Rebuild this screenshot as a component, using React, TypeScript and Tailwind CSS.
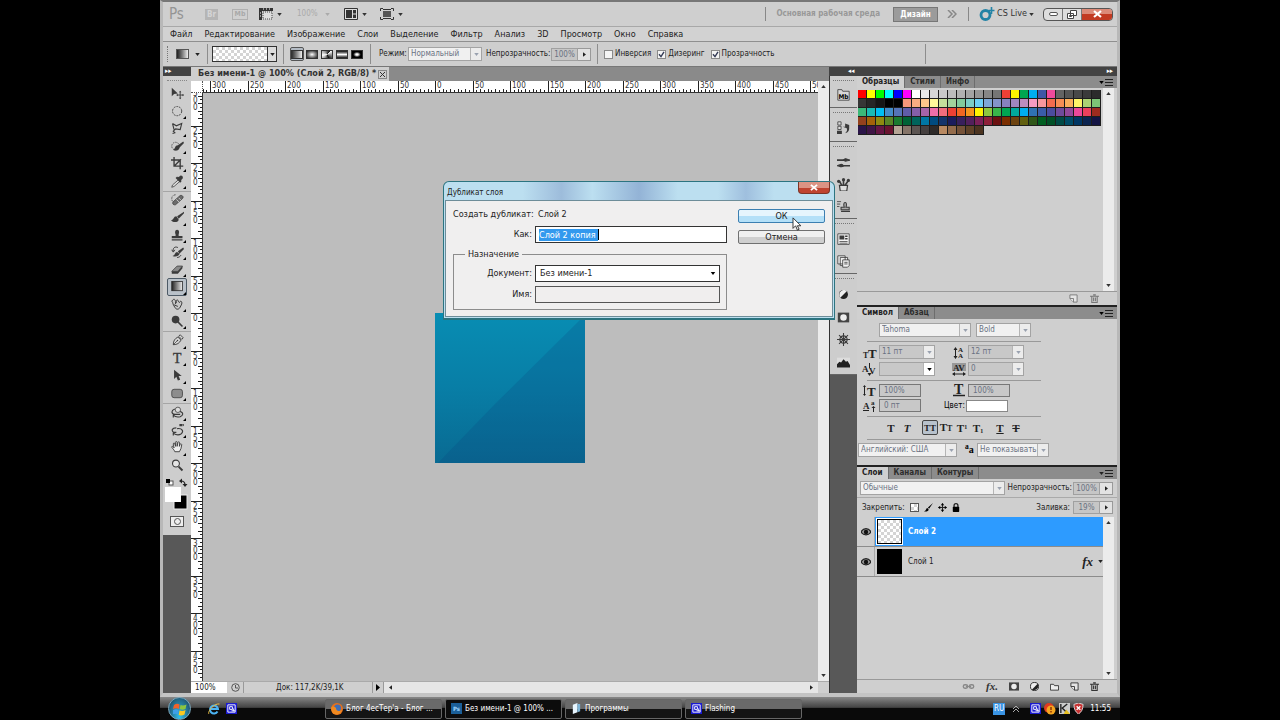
import { useEffect, useRef, useState } from "react";
import type { ReactNode } from "react";
import clsx from "clsx";

const swatches = (
    "ff0000 ffff00 00ff00 00ffff 0000ff ff00ff ffffff ebebeb d7d7d7 c9c9c9 bcbcbc b0b0b0 a3a3a3 959595 868686 757575 ee4036 fff200 00a651 00aeef 3f57a5 ee4a9b 636363 555555 484848 3a3a3a 2b2b2b " +
    "363636 262626 161616 000000 000000 f7977a f9ad81 fdc68a fff79a c4df9b a2d39c 82ca9d 7bcdc8 6ecff6 7ea7d8 8493ca 8882be a187be bc8dbf f49ac2 f6989d f26c4f f68e55 fbaf5c fff467 acd373 7cc576 " +
    "3bb878 1abbb4 00bff3 438cca 5574b9 605ca8 855fa8 a763a8 f06ea9 f26d7d ed4034 f26522 f7941d fff200 8dc73f 39b54a 00a651 00a99d 00aeef 2f72b4 3a5ca8 4a4c9e 6f4a9b 92489a ec4899 ed405b 9e2b1f " +
    "93411d a36209 8f8a10 598527 1a7b30 006236 00645b 0076a3 004b80 14346b 1b1c5c 38205c 52205c 7a2058 8e2039 6b1010 7b2e00 6d4310 626010 2f5618 005e20 005026 004a46 004b67 003663 0c2450 141444 " +
    "2a1448 3f1546 651644 6a1430 b5a595 857468 5c5552 45403f 2e2a29 b98a62 946c4c 755238 5f4228 4c3420"
).split(" ");

/* ---------- small building blocks ---------- */

function Tri({ className = "" }: { className?: string }) {
    return (
        <svg viewBox="0 0 6 4" className={clsx("h-[3px] w-[5px] shrink-0", className)} fill="currentColor">
            <path d="M0 0h6L3 4z" />
        </svg>
    );
}

function Checker({ className = "" }: { className?: string }) {
    return (
        <span className={clsx("block bg-white bg-[conic-gradient(#d4d4d4_25%,white_0_50%,#d4d4d4_0_75%,white_0)] bg-[length:6px_6px]", className)} />
    );
}

function Combo({ label, value, className = "", arrow = "text-gray-400", field = "bg-white/70 text-gray-500" }: {
    label: string; value: string; className?: string; arrow?: string; field?: string;
}) {
    return (
        <span className={clsx("relative flex h-[14px] items-stretch border border-[#a3a3a3]", className)}>
            <select aria-label={label} className={clsx("min-w-0 flex-1 appearance-none py-0 pr-[11px] pl-0.5 leading-[12px] outline-none", field)}>
                <option>{value}</option>
            </select>
            <span className={clsx("pointer-events-none absolute inset-y-0 right-0 flex w-[11px] items-center justify-center border-l border-[#b5b5b5] bg-[#ececec]", arrow)}>
                <Tri />
            </span>
        </span>
    );
}

function Percent({ label, value }: { label: string; value: string }) {
    return (
        <span className="flex h-[13px]">
            <input aria-label={label} defaultValue={value} className="w-[27px] border border-[#a0a0a0] bg-[#c6c6c6] text-center leading-[11px] text-gray-500 outline-none" />
            <button aria-label={`${label} ползунок`} className="flex w-[13px] items-center justify-center border border-l-0 border-[#999] bg-[#e2e2e2]">
                <Tri className="-rotate-90" />
            </button>
        </span>
    );
}

function Check({ label, on = false }: { label: string; on?: boolean }) {
    return (
        <label className="flex items-center gap-0.5">
            <span className="relative block size-[9px]">
                <input type="checkbox" defaultChecked={on} className="peer block size-[9px] appearance-none border border-[#8a8a8a] bg-[#f4f4f4]" />
                <svg viewBox="0 0 9 9" className="pointer-events-none absolute inset-0 hidden peer-checked:block" fill="none" stroke="#333a55" strokeWidth="1.4">
                    <path d="M2 4.2 4 6.6 7 1.8" />
                </svg>
            </span>
            {label}
        </label>
    );
}

function Tabs({ items }: { items: string[] }) {
    return (
        <div role="tablist" className="flex h-[12px] shrink-0 items-stretch bg-[#8c8c8c] text-[8px] font-bold">
            {items.map((t, i) => (
                <button key={t} role="tab" aria-selected={i === 0} className={clsx("border-r border-[#6d6d6d] px-[5px] leading-[12px]", i === 0 ? "bg-[#d0d0d0] text-[#222]" : "text-[#2d2d2d]")}>
                    {t}
                </button>
            ))}
            <button aria-label="Меню панели" className="ml-auto flex items-center gap-px pr-1">
                <Tri className="h-[2px] w-[4px]" />
                <svg viewBox="0 0 8 8" className="size-2" stroke="#222"><path d="M0 1.5h8M0 4.5h8M0 7.5h8" /></svg>
            </button>
        </div>
    );
}

function ScrollBar({ className = "" }: { className?: string }) {
    return (
        <div className={clsx("flex w-[11px] shrink-0 flex-col items-center justify-between bg-[#ececec] py-1 text-[#333]", className)}>
            <Tri className="rotate-180" />
            <Tri />
        </div>
    );
}

/* ---------- tool icons, 16x16 grid ---------- */

const D = "#3b3b3b";

const toolGroups: { name: string; icon: ReactNode; plain?: boolean }[][] = [
    [
        { name: "Перемещение", plain: true, icon: <><path d="M1 1v11l3-3 5-.5z" fill={D} /><path d="M12 6v9M7.500 10.500h9" stroke={D} strokeWidth="1.200" /><path d="m12 5 1.500 2h-3zM12 16l1.500-2h-3zM7 10.500l2-1.500v3zM17 10.500 15 9v3z" fill={D} /></> },
        { name: "Овальная область", icon: <circle cx="8" cy="8" r="6" fill="none" stroke={D} strokeDasharray="2.500 1.300" strokeWidth="1.200" /> },
        { name: "Лассо", icon: <path d="M2 2l5 3 7-3-2 8-6-1-3 3 2 2-3 1M2 2l2 8" fill="none" stroke={D} strokeWidth="1.500" /> },
        { name: "Быстрое выделение", icon: <><circle cx="6" cy="8" r="5" fill="none" stroke={D} strokeDasharray="2 1.200" /><path d="M16 2 9 7l2 3 6-6zM9 7c-4 0-3 4-6 6 4 2 8 0 8-3z" fill={D} /></> },
        { name: "Рамка", icon: <path d="M4 0v12h12M0 4h12v12M4 12l9-9" fill="none" stroke={D} strokeWidth="1.800" /> },
        { name: "Пипетка", icon: <><path d="m10 6-8 7-1 3 3-1 8-7z" fill="#ddd" stroke={D} /><path d="M11 2c2-3 6 0 4 3l-2 2 1 1-2 2-6-6 2-2 1 1z" fill={D} /></> },
    ],
    [
        { name: "Лечащая кисть", icon: <><path d="M6 1C3 1 1 3 1 6s1 4 3 5" fill="none" stroke={D} strokeDasharray="2 1" /><path d="m3 10 9-8c3-1 5 2 3 4l-9 8c-3 1-5-2-3-4z" fill="#6b6b6b" stroke={D} /><path d="m7 7 4 4M10 5l3 3" stroke="#ddd" /></> },
        { name: "Кисть", icon: <path d="M17 1 8 7l2 3 7-7zM7 7c-4 0-3 5-7 5 3 4 10 3 10-1z" fill={D} /> },
        { name: "Штамп", icon: <path d="M6 7c-1-2-1-6 2-6s3 4 2 6v2h5v3H1V9h5zM1 13.500h14v1.500H1z" fill={D} /> },
        { name: "Архивная кисть", icon: <><path d="M16 2 9 7l2 3 6-6zM8 8c-3 0-2 4-6 5 4 2 9 0 9-3z" fill={D} /><path d="M9 2C5 0 2 3 3 7M1 5l2 3 2-3M13 12c-1 2-3 3-5 3" fill="none" stroke={D} strokeWidth="1.300" /></> },
        { name: "Ластик", icon: <><path d="m1 11 7-7h7l-6 7z" fill="#8a8a8a" stroke={D} /><path d="M1 11h8v3H1zM9 11l6-7v3l-6 7z" fill={D} /></> },
        { name: "Градиент", icon: <rect x="1" y="2" width="14" height="12" fill="url(#grad-h)" stroke="#222" /> },
        { name: "Палец", icon: <path d="M3 2c2-2 3 3 4 4-1-4 2-5 3-1l1 1c1-3 4-2 3 2l-2 4c-2 4-6 3-7 0C2 9 3 6 1 4zM4 9l5 2M6 5v3" fill="#c8c8c8" stroke={D} strokeWidth="1.300" /> },
        { name: "Осветлитель", icon: <><circle cx="6" cy="6" r="5" fill={D} /><path d="m9 9 6 6" stroke={D} strokeWidth="2" /></> },
    ],
    [
        { name: "Перо", icon: <><path d="M3 14c0-5 2-8 6-10l4 4c-2 4-5 6-10 6zM10 3l2-2 4 4-2 2z" fill="#d8d8d8" stroke={D} strokeWidth="1.200" /><path d="m3 14 5-5" stroke={D} /><circle cx="8.500" cy="8.500" r="1" fill={D} /></> },
        { name: "Текст", icon: <text x="8" y="14" textAnchor="middle" fontSize="18" fontFamily="Liberation Serif, serif" fill={D} stroke={D} strokeWidth=".5">T</text> },
        { name: "Стрелка", icon: <path d="M4 1v12l3-3 2 5 3-1-2-5h4z" fill={D} /> },
        { name: "Фигура", icon: <rect x="1" y="3" width="14" height="11" rx="3" fill="#8d8d8d" stroke={D} /> },
    ],
    [
        { name: "Поворот 3D", icon: <><circle cx="9" cy="5" r="3.500" fill="#ddd" stroke={D} /><path d="M5 4C0 6 0 10 5 11h7M12 7c5 2 4 5 0 7-4 1-7 0-9-2M3 15v-4h4" fill="none" stroke={D} strokeWidth="1.500" /></> },
        { name: "Камера 3D", icon: <><path d="M11 0h4v3h-4zM15 1l2-1v3z" fill={D} /><path d="M7 5C1 5 0 9 4 11M8 6c7-1 9 4 5 7-3 2-7 1-10-1M3 15v-4h4" fill="none" stroke={D} strokeWidth="1.500" /></> },
        { name: "Рука", icon: <path d="M5 14C4 11 2 10 1 8c0-2 2-1 3 1L3 4c0-2 2-2 2 0l1 3V2c0-2 2-2 2 0v5l1-5c1-2 2-1 2 0v5l1-3c1-1 2 0 2 1l-1 5-2 4z" fill="#eee" stroke={D} strokeWidth="1.200" /> },
        { name: "Масштаб", plain: true, icon: <><circle cx="6.500" cy="6" r="4.500" fill="#e5e5e5" stroke={D} strokeWidth="1.400" /><path d="m10 10 5 5" stroke={D} strokeWidth="2.500" /></> },
    ],
];

function Toolbox() {
    const [active, setActive] = useState("Градиент");
    const heights = ["h-[105px]", "h-[139px]", "h-[71px]", "h-[71px]"];
    return (
        <aside className="flex w-7 shrink-0 flex-col bg-[#585858]">
            <div className="h-[9px] bg-[#434343] pl-0.5 text-[7px] leading-[8px] text-white">▸▸</div>
            <div className="flex flex-col bg-[#cdcdcd] pb-2">
                <div className="mx-1 mt-1 mb-[4px] border-t border-dotted border-[#888]" />
                {toolGroups.map((group, g) => (
                    <div key={g} className={clsx("flex flex-col", heights[g], g > 0 && "mt-px border-t border-[#a5a5a5]")}>
                        {group.map((t) => (
                            <button
                                key={t.name}
                                aria-label={t.name}
                                onClick={() => setActive(t.name)}
                                className={clsx("relative mx-1 flex min-h-0 flex-1 items-center justify-center rounded-xs border", active === t.name ? "border-[#4d5a66] bg-[#b9c1c9]" : "border-transparent")}
                            >
                                <svg viewBox="0 0 17 17" className="size-[13px]">{t.icon}</svg>
                                {!t.plain && <svg viewBox="0 0 3 3" className="absolute right-0 bottom-0 size-[3px]"><path d="M3 0v3H0z" /></svg>}
                            </button>
                        ))}
                    </div>
                ))}
                {/* foreground / background colours */}
                <svg viewBox="0 0 28 36" className="mt-1 h-9 w-7">
                    <rect x="6" y="3" width="4" height="4" fill="#fff" stroke="#555" />
                    <rect x="3" y="1" width="4" height="4" fill="#000" />
                    <path d="M18 3q4 0 4 4" fill="none" stroke="#222" strokeWidth="1.200" />
                    <path d="m16 3 3-2.500v5zM19.500 6h5L22 9z" fill="#222" />
                    <rect x="11" y="17" width="13" height="14" fill="#000" stroke="#eee" />
                    <rect x="2" y="9" width="16" height="15" fill="#fff" />
                </svg>
                <button aria-label="Быстрая маска" className="mx-auto mt-0.5 flex h-[11px] w-[14px] items-center justify-center border border-[#555] bg-[#eee]">
                    <span className="size-[7px] rounded-full border border-[#555]" />
                </button>
            </div>
        </aside>
    );
}

/* ---------- application bars ---------- */

function TitleBar() {
    return (
        <header className="flex h-6 shrink-0 items-center bg-[#cfcfcf] pl-[6px] text-[#333]">
            <span className="w-[36px] text-[15px] leading-[18px] text-[#949494]">Ps</span>
            <button className="flex h-[11px] w-[13px] items-center justify-center bg-[#b5b5b5] text-[8px] leading-[11px] font-bold text-[#d4d4d4]">Br</button>
            <button className="ml-[14px] flex h-[11px] w-4 items-center justify-center border border-[#b0b0b0] text-[7px] leading-[9px] font-bold text-[#a8a8a8]">Mb</button>
            <button aria-label="Вспомогательные элементы" className="ml-[11px] flex items-center gap-1">
                <svg viewBox="0 0 14 12" className="h-3 w-[14px]"><path d="M0 0h14v3H3v9H0z" fill="#333" /><path d="M4 4h9v7H4z" fill="#ddd" stroke="#444" strokeDasharray="1 1" /><path d="M4 1h1m2 0h1m2 0h1M1 5h1m-1 3h1" stroke="#fff" /></svg>
                <Tri />
            </button>
            <button className="ml-[15px] flex items-center gap-[7px] text-[8px] text-[#aaa]">100% <Tri /></button>
            <button aria-label="Упорядочить документы" className="ml-[14px] flex items-center gap-1">
                <svg viewBox="0 0 14 12" className="h-3 w-[14px]"><path d="M.5.500h13v11H.5z" fill="#ddd" stroke="#333" /><path d="M2 2h6v8H2zM9 2h3v3.500H9zM9 6.500h3V10H9z" fill="#333" /></svg>
                <Tri />
            </button>
            <button aria-label="Режимы экрана" className="ml-[13px] flex items-center gap-1">
                <svg viewBox="0 0 14 12" className="h-3 w-[14px]"><path d="M3 3h8v6H3z" fill="#555" /><path d="M.5 3V.500H3M11 .500h2.500V3M13.500 9v2.500H11M3 11.500H.5V9M3 1.500h8M3 10.500h8" fill="none" stroke="#333" /></svg>
                <Tri />
            </button>
            <div className="ml-auto flex h-full items-center pr-1">
                <span className="mr-[10px] h-[14px] border-l border-[#888]" />
                <button className="text-[8px] font-bold whitespace-nowrap text-[#989898]">Основная рабочая среда</button>
                <button className="ml-[13px] h-[15px] w-[45px] border border-[#777] bg-[#9b9b9b] text-[8px] leading-[13px] font-bold text-white">Дизайн</button>
                <svg viewBox="0 0 10 8" className="ml-[9px] h-2 w-[10px]" fill="none" stroke="#888" strokeWidth="1.500"><path d="m1 0 4 4-4 4M5 0l4 4-4 4" /></svg>
                <span className="ml-[11px] h-[14px] border-l border-[#888]" />
                <svg viewBox="0 0 16 14" className="ml-[10px] h-[14px] w-4"><circle cx="6.500" cy="8" r="4.500" fill="none" stroke="#2383a5" strokeWidth="2.800" /><path d="M12.500 0v7M9.500 3.500h6" stroke="#2383a5" strokeWidth="1.600" /></svg>
                <button className="ml-0.5 flex items-center gap-0.5 text-[9px] whitespace-nowrap">CS Live <Tri /></button>
                <div className="ml-[9px] flex h-[13px] overflow-hidden rounded-sm border border-[#555] bg-[#ddd]">
                    <button aria-label="Свернуть" className="flex w-[19px] items-center justify-center border-r border-[#777]"><span className="h-1 w-[9px] rounded-xs border border-[#555] bg-white" /></button>
                    <button aria-label="Восстановить" className="flex w-[19px] items-center justify-center border-r border-[#777]">
                        <svg viewBox="0 0 10 9" className="h-[9px] w-[10px]" fill="#fff" stroke="#444"><path d="M3.500.500h6v5h-6zM.5 3.500h6v5h-6z" /><path d="M2.500 5.500h2v1h-2z" /></svg>
                    </button>
                    <button aria-label="Закрыть" className="flex w-[30px] items-center justify-center bg-linear-to-b from-[#dc8a78] from-50% to-[#c23a22] to-50%">
                        <svg viewBox="0 0 9 8" className="h-2 w-[9px]" stroke="#fff" strokeWidth="2.200"><path d="m1 1 7 6M8 1 1 7" /></svg>
                    </button>
                </div>
            </div>
        </header>
    );
}

const menus = ["Файл", "Редактирование", "Изображение", "Слои", "Выделение", "Фильтр", "Анализ", "3D", "Просмотр", "Окно", "Справка"];

function MenuBar() {
    return (
        <nav className="flex h-[15px] shrink-0 items-center gap-[12px] border-t border-[#a8a8a8] bg-[#d2d2d2] pl-[7px] text-[9px] text-[#222]">
            {menus.map((m) => <button key={m} className="leading-[12px]">{m}</button>)}
        </nav>
    );
}

const fills = [
    ["Линейный", "bg-linear-to-r from-[#333] to-[#eee]"],
    ["Радиальный", "bg-radial from-white to-[#222]"],
    ["Конусовидный", "bg-[conic-gradient(from_45deg,#fff,#111,#fff_60%,#111)]"],
    ["Зеркальный", "bg-linear-to-b from-[#111] via-white to-[#111]"],
    ["Ромбовидный", "bg-radial from-white from-15% to-black to-60%"],
];

function OptionsBar() {
    return (
        <div className="flex h-[26px] shrink-0 items-center border-t border-b border-t-[#8f8f8f] border-b-[#777] bg-[#cecece] pl-1 text-[8px] whitespace-nowrap text-[#222]">
            <span className="h-4 border-l border-dotted border-[#777]" />
            <button aria-label="Инструмент" className="ml-2 flex items-center gap-[6px]">
                <span className="h-[10px] w-[13px] border border-[#555] bg-linear-to-r from-[#222] to-[#eee]" /><Tri />
            </button>
            <span className="ml-[7px] h-5 border-l border-[#8d8d8d]" />
            <button aria-label="Градиент" className="ml-1 flex h-4 w-[65px] border border-[#333]">
                <Checker className="h-full flex-1" />
                <span className="flex h-full w-[9px] items-center justify-center border-l border-[#333] bg-[#ddd]"><Tri /></span>
            </button>
            <span className="ml-[6px] h-5 border-l border-[#8d8d8d]" />
            <div className="ml-[6px] flex gap-px">
                {fills.map(([name, bg], i) => (
                    <button key={name} aria-label={name} className={clsx("flex h-[14px] w-[14px] items-center justify-center rounded-xs border", i === 0 ? "border-[#555] bg-[#b3bbc4]" : "border-transparent")}>
                        <span className={clsx("h-[9px] w-[12px] border border-[#333]", bg)} />
                    </button>
                ))}
            </div>
            <span className="ml-[6px] h-5 border-l border-[#8d8d8d]" />
            <span className="ml-2 w-[29px]">Режим:</span>
            <Combo label="Режим" value="Нормальный" className="w-[74px]" />
            <span className="ml-1 w-[65px]">Непрозрачность:</span>
            <Percent label="Непрозрачность" value="100%" />
            <span className="mx-[6px] h-5 border-l border-[#8d8d8d]" />
            <div className="flex gap-[6px]">
                <Check label="Инверсия" />
                <Check label="Дизеринг" on />
                <Check label="Прозрачность" on />
            </div>
            <span className="mr-[191px] ml-auto h-5 border-l border-[#8d8d8d]" />
        </div>
    );
}

/* ---------- document window ---------- */

// 50 px of the document take 37.5 px on screen
const STEP = 37.5;

function useSize() {
    const ref = useRef<SVGSVGElement>(null);
    const [size, setSize] = useState({ w: 0, h: 0 });

    useEffect(() => {
        const measure = () => {
            const box = ref.current?.getBoundingClientRect();
            if (box) setSize({ w: box.width, h: box.height });
        };
        measure();
        window.addEventListener("resize", measure);
        return () => window.removeEventListener("resize", measure);
    }, []);

    return { ref, ...size };
}

// tick marks from just before the edge of the ruler up to its length
function ticksFor(length: number, origin: number) {
    const list: { n: number; pos: number }[] = [];
    for (let n = -Math.floor(((origin + 6) * 10) / STEP); origin + (n * STEP) / 10 < length; n++) {
        list.push({ n, pos: Math.round(origin + (n * STEP) / 10) });
    }
    return list;
}

function RulerH() {
    const { ref, w } = useSize();
    return (
        <svg ref={ref} className="h-3 min-w-0 flex-1 bg-white">
            {ticksFor(w, 232).map(({ n, pos }) => (
                <g key={n}>
                    <path d={`M${pos + 0.5} ${n % 10 === 0 ? 0 : n % 2 ? 9 : 8}V12`} stroke="#222" />
                    {n % 10 === 0 && <text x={pos + 2} y="7" fontSize="8" fill="#333">{Math.abs(n) * 5}</text>}
                </g>
            ))}
            <path d={`M0 11.500H${w}`} stroke="#333" />
        </svg>
    );
}

function RulerV() {
    const { ref, h } = useSize();
    return (
        <svg ref={ref} className="h-full w-3 shrink-0 bg-white">
            {ticksFor(h, 220).map(({ n, pos }) => (
                <g key={n}>
                    <path d={`M${n % 10 === 0 ? 0 : n % 2 ? 9 : 7} ${pos + 0.5}H12`} stroke="#222" />
                    {n % 10 === 0 && String(Math.abs(n) * 5).split("").map((c, k) => (
                        <text key={k} x="2" y={pos + 8 + k * 7} fontSize="8" fill="#333">{c}</text>
                    ))}
                </g>
            ))}
            <path d={`M11.500 0V${h}`} stroke="#333" />
        </svg>
    );
}

function DocumentWindow() {
    return (
        <main className="flex min-w-0 flex-1 flex-col">
            <div className="flex h-[14px] shrink-0 bg-[#8a8a8a]">
                <div className="flex items-center gap-0.5 bg-[#cfcfcf] pr-0.5 pl-[7px] text-[9px] font-bold whitespace-nowrap text-[#333]">
                    Без имени-1 @ 100% (Слой 2, RGB/8) *
                    <button aria-label="Закрыть документ" className="flex size-[9px] items-center justify-center border border-[#888]">
                        <svg viewBox="0 0 5 5" className="size-[5px]" stroke="#333"><path d="m0 0 5 5M5 0 0 5" /></svg>
                    </button>
                </div>
            </div>
            <div className="flex min-h-0 flex-1">
                <div className="flex min-w-0 flex-1 flex-col">
                    <div className="flex shrink-0">
                        <span className="size-3 border-r border-b border-dotted border-[#555] bg-white" />
                        <RulerH />
                    </div>
                    <div className="flex min-h-0 flex-1">
                        <RulerV />
                        <div className="relative min-w-0 flex-1 overflow-hidden bg-[#bdbdbd]">
                            {/* artboard */}
                            <svg viewBox="0 0 150 150" className="absolute top-[220px] left-[232px] size-[150px]">
                                <rect width="150" height="150" fill="url(#sea)" />
                                <path d="M150 2v148H3l58-60z" fill="#0a3f7c" opacity=".2" />
                            </svg>
                        </div>
                    </div>
                </div>
                <ScrollBar />
            </div>
            <footer className="flex h-[12px] shrink-0 items-stretch border-t border-[#aaa] bg-[#cfcfcf] text-[8px] text-[#222]">
                <input aria-label="Масштаб" defaultValue="100%" className="w-9 bg-white pl-1 leading-[11px] outline-none" />
                <button aria-label="Предпросмотр" className="flex w-[17px] items-center justify-center border-r border-[#999]">
                    <svg viewBox="0 0 9 9" className="size-[9px]" fill="none" stroke="#555"><circle cx="4.500" cy="4.500" r="3.800" /><path d="M4.500 2v3H7" /></svg>
                </button>
                <span className="w-32 pl-8 leading-[11px]">Док: 117,2K/39,1K</span>
                <button aria-label="Сведения" className="flex w-[12px] items-center justify-center border-x border-[#999]">
                    <svg viewBox="0 0 4 7" className="h-[7px] w-1"><path d="M0 0v7l4-3.500z" /></svg>
                </button>
                <div className="flex flex-1 items-center justify-between bg-[#e6e6e6] px-1">
                    <Tri className="rotate-90" />
                    <Tri className="-rotate-90" />
                </div>
                <span className="w-[11px]" />
            </footer>
        </main>
    );
}

/* ---------- collapsed panels ---------- */

const dock: { name: string; icon: ReactNode }[][] = [
    [{ name: "Mini Bridge", icon: <><path d="M1 2h5l1 2h8v11H1z" fill="#d8d8d8" stroke={D} /><text x="8" y="13" textAnchor="middle" fontSize="8" fontWeight="bold">Mb</text></> }],
    [{ name: "История", icon: <><path d="M1 1h4v4H1zM1 6.500h4v4H1z" fill="#ddd" stroke={D} /><path d="M0 12h6v4H0z" fill={D} /><path d="M7 7h3V3l5 2v4c0 4-3 6-5 6 2-2 3-3 2-6z" fill={D} /></> }],
    [
        { name: "Наборы кистей", icon: <><path d="M0 5h9M7 12h9" stroke={D} strokeWidth="2" /><path d="M8 5c3-4 4 0 8 0-4 0-5 3-8 0zM8 12c-3-4-4 0-8 0 4 0 5 3 8 0z" fill={D} stroke={D} strokeWidth="1.500" /></> },
        { name: "Кисть", icon: <><path d="M3 9h10l-1 7H4z" fill="#ddd" stroke={D} strokeWidth="1.500" /><path d="M8 9V3M10 9l4-6M6 9 3 4" stroke={D} strokeWidth="2" /><circle cx="8" cy="2" r="2" fill={D} /><circle cx="14" cy="3" r="2" fill={D} /><circle cx="2" cy="4" r="2" fill={D} /></> },
        { name: "Источник клонов", icon: <><path d="M9 9c-1-3-1-6 1-6s2 3 1 6h4v3H5V9zM5 14h11" fill="#aaa" stroke={D} strokeWidth="1.300" /><path d="M0 2h5M0 5h4M0 8h3" stroke={D} /></> },
    ],
    [
        { name: "Стили слоев", icon: <><path d="M1 1h14v13H1z" fill="#f3f3f3" stroke={D} /><path d="M3 3h6v5H3zM10 3h3v2h-3zM10 6h3v2h-3zM3 10h10v1H3zM3 12h10v1H3z" fill={D} /></> },
        { name: "Композиции слоев", icon: <><path d="M1 1h9v10H1zM4 3h9v10H4z" fill="#f0f0f0" stroke={D} /><path d="M7 6h8v7l-2 2H7z" fill="#f0f0f0" stroke={D} /><path d="M9 9h4m-4 2h4" stroke={D} /></> },
    ],
    [
        { name: "Коррекция", icon: <><circle cx="8" cy="8" r="5.500" fill="#222" /><path d="M4 12c-3-4 0-9 4-9.500 2 0 3 .5 4 1.500z" fill="#eee" /></> },
        { name: "Маски", icon: <><path d="M1 2h14v12H1z" fill="#444" /><circle cx="8" cy="8" r="4" fill="#eee" /></> },
        { name: "Навигатор", icon: <><circle cx="8" cy="8" r="4.500" fill="none" stroke={D} strokeWidth="1.500" /><path d="M8 0v16M0 8h16M2.500 2.500l11 11M13.500 2.500l-11 11" stroke={D} strokeWidth="1.300" /></> },
        { name: "Гистограмма", icon: <><path d="M0 2h16v12H0z" fill="#ddd" /><path d="M0 14V10l3-3 2 1 3-4 3 3 2-1 3 5v3z" fill="#222" /></> },
    ],
];

function Dock() {
    const heights = ["h-[32px]", "h-[34px]", "h-[77px]", "h-[55px]", "h-[101px]"];
    return (
        <aside className="flex w-7 shrink-0 flex-col border-l border-[#333] bg-[#585858]">
            {dock.map((group, g) => (
                <div key={g} className={clsx("flex flex-col border-b border-[#666] bg-[#cdcdcd]", heights[g])}>
                    <span className={clsx("mx-[3px] mt-1 border-t border-dotted border-[#777]", g > 1 && "mb-1")} />
                    {group.map((p) => (
                        <button key={p.name} aria-label={p.name} className="flex min-h-0 flex-1 items-center justify-center">
                            <svg viewBox="0 0 16 16" className="size-[13px]">{p.icon}</svg>
                        </button>
                    ))}
                </div>
            ))}
        </aside>
    );
}

/* ---------- panels ---------- */

function TrashIcon() {
    return <svg viewBox="0 0 10 10" className="size-[9px]" fill="none" stroke="currentColor" strokeWidth="1.200"><path d="M2 3v6.500h6V3M0 2.500h10M3.500 1h3M4 4v4M6 4v4" /></svg>;
}

function PageIcon() {
    return <svg viewBox="0 0 10 10" className="size-[9px]" fill="#e5e5e5" stroke="currentColor"><path d="M1 1h8v8H5L1 5z" /><path d="M1 5h4v4" /></svg>;
}

function SwatchesPanel() {
    return (
        <section className="flex h-[229px] shrink-0 flex-col bg-[#cfcfcf]">
            <Tabs items={["Образцы", "Стили", "Инфо"]} />
            <div className="flex min-h-0 flex-1">
                <div className="min-w-0 flex-1 px-px pt-0.5">
                    <div className="grid w-[243px] grid-cols-27">
                        {swatches.map((c, i) => (
                            <button key={i} aria-label={`#${c}`} className="size-[9px] border-r border-b border-[#1d1d1d]" style={{ backgroundColor: `#${c}` }} />
                        ))}
                    </div>
                </div>
                <ScrollBar className="mr-[3px]" />
            </div>
            <div className="flex h-[14px] items-center justify-end gap-3 border-t border-[#999] pr-[18px] text-[#777]">
                <button aria-label="Новый образец"><PageIcon /></button>
                <button aria-label="Удалить образец"><TrashIcon /></button>
            </div>
        </section>
    );
}

function Glyph({ children }: { children: ReactNode }) {
    return <svg viewBox="0 0 14 13" className="h-[13px] w-[14px] shrink-0 overflow-visible" fontFamily="Liberation Serif, serif" fontWeight="bold" fill="#222">{children}</svg>;
}

const fauxStyles: { name: string; node: ReactNode; cls: string }[] = [
    { name: "Полужирный", node: "T", cls: "font-bold" },
    { name: "Курсив", node: "T", cls: "italic font-bold" },
    { name: "Все прописные", node: "TT", cls: "ml-[7px] font-bold" },
    { name: "Капители", node: <>T<span className="text-[8px]">T</span></>, cls: "font-bold" },
    { name: "Верхний индекс", node: <>T<sup className="text-[6px]">1</sup></>, cls: "font-bold" },
    { name: "Нижний индекс", node: <>T<sub className="text-[6px]">1</sub></>, cls: "font-bold" },
    { name: "Подчеркнутый", node: "T", cls: "ml-[6px] font-bold underline" },
    { name: "Зачеркнутый", node: "T", cls: "font-bold line-through" },
];

function CharacterPanel() {
    const grey = "bg-[#c8c8c8] text-gray-500";
    const box = "h-[13px] w-[42px] border border-[#777] bg-[#c8c8c8] pl-1 leading-[11px] text-gray-500 outline-none";
    return (
        <section className="flex h-[158px] shrink-0 flex-col bg-[#cfcfcf] text-[8px]">
            <Tabs items={["Символ", "Абзац"]} />
            <div className="flex w-[184px] flex-1 flex-col justify-between pt-1 pb-2 pl-1.5">
                <div className="flex gap-[5px] pl-4">
                    <Combo label="Гарнитура" value="Tahoma" className="w-[92px]" />
                    <Combo label="Начертание" value="Bold" className="w-[55px]" />
                </div>
                <hr className="ml-1 border-[#999]" />
                <div className="grid grid-cols-[14px_71px_14px_1fr] items-center gap-x-0.5 gap-y-[3px]">
                    <Glyph><text x="0" y="12" fontSize="8">T</text><text x="5" y="12" fontSize="13">T</text></Glyph>
                    <Combo label="Кегль" value="11 пт" className="w-[56px]" field={grey} />
                    <Glyph><text x="6" y="6" fontSize="7">A</text><text x="6" y="12" fontSize="7">A</text><path d="M3.500 2v9" stroke="#222" /><path d="m1.500 4 2-3 2 3zM1.500 10l2 3 2-3z" /></Glyph>
                    <Combo label="Интерлиньяж" value="12 пт" className="w-[56px]" field={grey} />
                    <Glyph><text x="-1" y="9" fontSize="9">A</text><text x="6" y="11" fontSize="9">V</text><path d="M6.500 0v5" stroke="#222" /><path d="m4.500 10 2 3 2-3z" /></Glyph>
                    <Combo label="Кернинг" value=" " className="w-[56px]" field={grey} arrow="bg-white text-black" />
                    <Glyph><rect width="14" height="8" fill="#999" /><text x="1" y="8" fontSize="9">AV</text><path d="M1 11h12" stroke="#222" /><path d="m0 11 3-2v4zM14 11l-3-2v4z" /></Glyph>
                    <Combo label="Трекинг" value="0" className="w-[56px]" field={grey} />
                </div>
                <hr className="ml-1 border-[#999]" />
                <div className="grid grid-cols-[14px_71px_14px_1fr] items-center gap-x-0.5 gap-y-0.5">
                    <Glyph><path d="M1.500 2v9" stroke="#222" /><path d="M0 3l1.500-2L3 3zM0 10l1.500 2L3 10z" /><text x="4" y="12" fontSize="13">T</text></Glyph>
                    <input aria-label="Масштаб по вертикали" defaultValue="100%" className={box} />
                    <Glyph><text x="2" y="10" fontSize="14">T</text><path d="M1 11.500h12" stroke="#222" strokeWidth="1.500" /></Glyph>
                    <input aria-label="Масштаб по горизонтали" defaultValue="100%" className={box} />
                    <Glyph><text x="0" y="10" fontSize="9">A</text><text x="8" y="6" fontSize="7">a</text><path d="M0 11.500h6M10.500 8v5" stroke="#222" /><path d="m8.500 9 2-2 2 2z" /></Glyph>
                    <input aria-label="Сдвиг базовой линии" defaultValue="0 пт" className={box} />
                    <label htmlFor="color" className="col-span-2 -ml-2 flex items-center justify-between">
                        Цвет:
                        <button id="color" aria-label="Цвет текста" className="ml-auto h-[12px] w-[42px] border border-[#888] bg-white" />
                        <span className="w-[33px]" />
                    </label>
                </div>
                <hr className="ml-1 border-[#999]" />
                <div className="flex h-[15px] items-center pl-5 font-['Liberation_Serif',serif] text-[11px] text-[#222]">
                    {fauxStyles.map((s, i) => (
                        <button key={s.name} aria-label={s.name} className={clsx("h-[15px] w-4 rounded-xs border leading-[12px] whitespace-nowrap", i === 2 ? "border-[#444] bg-[#b8c2cc] text-[9px]" : "border-transparent", s.cls)}>
                            {s.node}
                        </button>
                    ))}
                </div>
                <hr className="ml-1 border-[#999]" />
                <div className="-mr-2 -ml-[5px] flex items-center">
                    <Combo label="Язык" value="Английский: США" className="w-[100px]" />
                    <span className="ml-[8px] w-3 font-['Liberation_Serif',serif] text-[10px] leading-[12px] font-bold"><sup>a</sup>a</span>
                    <Combo label="Сглаживание" value="Не показывать" className="w-[72px]" />
                </div>
            </div>
        </section>
    );
}

const layers = [
    { name: "Слой 2", filled: false },
    { name: "Слой 1", filled: true },
];

function LayersPanel() {
    const [selected, setSelected] = useState("Слой 2");
    return (
        <section className="flex min-h-0 flex-1 flex-col bg-[#cfcfcf] text-[8px] text-[#222]">
            <Tabs items={["Слои", "Каналы", "Контуры"]} />
            <div className="flex h-[19px] shrink-0 items-center border-b border-[#aaa] pr-1 pl-[3px]">
                <Combo label="Режим наложения" value="Обычные" className="w-[145px]" />
                <span className="ml-auto pr-px">Непрозрачность:</span>
                <Percent label="Непрозрачность слоя" value="100%" />
            </div>
            <div className="flex h-[19px] shrink-0 items-center gap-[5px] pr-1 pl-[5px]">
                Закрепить:
                <button aria-label="Прозрачные пикселы"><Checker className="size-[9px] border border-[#555]" /></button>
                <button aria-label="Цвета пикселов"><svg viewBox="0 0 16 16" className="size-[9px]"><path d="M16 0 7 8l2 2zM6 9c-3 1-2 5-6 6 5 1 9-1 8-4z" /></svg></button>
                <button aria-label="Положение"><svg viewBox="0 0 16 16" className="size-[9px]"><path d="M8 1v14M1 8h14" stroke="#222" strokeWidth="2" /><path d="m8 0 3 4H5zM8 16l3-4H5zM0 8l4-3v6zM16 8l-4-3v6z" /></svg></button>
                <button aria-label="Закрепить все"><svg viewBox="0 0 12 14" className="h-[9px] w-[8px]"><path d="M3 7V4c0-4 6-4 6 0v3" fill="none" stroke="#222" strokeWidth="2" /><rect x="1" y="6" width="10" height="8" rx="1" /></svg></button>
                <span className="ml-auto -mr-0.5">Заливка:</span>
                <Percent label="Заливка" value="19%" />
            </div>
            <div className="flex min-h-0 flex-1">
                <ul className="min-w-0 flex-1">
                    {layers.map((l) => (
                        <li key={l.name} className="flex h-[30px] border-b border-[#8c8c8c]">
                            <button aria-label={`Видимость ${l.name}`} className="flex w-[18px] items-center justify-center border-r border-[#aaa]">
                                <svg viewBox="0 0 16 12" className="h-[8px] w-[10px]"><path d="M0 6c4-7 12-7 16 0-4 6-12 6-16 0z" fill="#999" stroke="#222" strokeWidth="2" /><circle cx="8" cy="6" r="3.500" fill="#111" /></svg>
                            </button>
                            <button onClick={() => setSelected(l.name)} className={clsx("flex flex-1 items-center gap-[6px] pl-0.5 text-left", selected === l.name ? "bg-[#2d9bff] font-bold text-white" : "")}>
                                {l.filled ? <span className="size-[25px] bg-black" /> : <Checker className="size-[25px] border border-black outline outline-white" />}
                                {l.name}
                            </button>
                            {l.filled && (
                                <span className="flex items-center gap-[5px] font-['Liberation_Serif',serif] text-[13px] font-bold italic">fx <Tri /></span>
                            )}
                        </li>
                    ))}
                </ul>
                <ScrollBar className="mr-[3px]" />
            </div>
            <div className="flex h-[14px] shrink-0 items-center justify-end gap-[11px] border-t border-[#999] pr-[18px] text-[#333]">
                <button aria-label="Связать слои"><svg viewBox="0 0 14 8" className="h-[7px] w-[13px]" fill="none" stroke="#888" strokeWidth="1.500"><rect x="1" y="2" width="5" height="4" rx="2" /><rect x="8" y="2" width="5" height="4" rx="2" /><path d="M4 4h6" /></svg></button>
                <button className="font-['Liberation_Serif',serif] text-[11px] leading-[13px] font-bold italic">fx.</button>
                <button aria-label="Добавить маску"><svg viewBox="0 0 11 9" className="h-[9px] w-[10px]"><path d="M0 0h11v9H0z" fill="#444" /><circle cx="5.500" cy="4.500" r="3" fill="#eee" /></svg></button>
                <button aria-label="Корректирующий слой"><svg viewBox="0 0 10 10" className="size-[9px]"><circle cx="5" cy="5" r="4.500" fill="#eee" stroke="#222" /><path d="M8.500 2 2 8.500c4 2 9-2 6.500-6.500z" fill="#222" /></svg></button>
                <button aria-label="Создать группу"><svg viewBox="0 0 10 8" className="h-2 w-[9px]"><path d="M.5 1h3.500l1 1.500h4.500v5H.5z" fill="#eee" stroke="#333" /></svg></button>
                <button aria-label="Новый слой"><PageIcon /></button>
                <button aria-label="Удалить слой"><TrashIcon /></button>
            </div>
        </section>
    );
}

/* ---------- dialog ---------- */

function DuplicateDialog() {
    return (
        <div role="dialog" aria-labelledby="dlg-title" className="absolute top-[181px] left-[283px] w-[392px] rounded-t-md border border-b-2 border-[#2c7480] bg-[#bcdff0] px-px pb-px text-[9px] text-[#222]">
            <div className="flex h-[18px] items-start bg-linear-to-r from-transparent from-20% via-[#9dbcdb] via-30% to-transparent to-38%">
                <div className="flex h-full flex-1 items-start bg-linear-to-r from-transparent from-38% via-[#93b3d6] via-50% to-transparent to-60%">
                    <h1 id="dlg-title" className="flex-1 pt-[5px] pl-0.5 text-[8px] leading-[12px]">Дубликат слоя</h1>
                    <span className="mr-6 h-full w-14 bg-linear-to-r from-transparent via-[#9fbfde] to-transparent" />
                    <button aria-label="Закрыть" className="mr-[3px] flex h-[12px] w-8 items-center justify-center rounded-b-sm border border-t-0 border-[#7c3426] bg-linear-to-b from-[#dc9484] from-50% to-[#c04430] to-50%">
                        <svg viewBox="0 0 9 8" className="h-[7px] w-2" stroke="#fff" strokeWidth="2.200"><path d="m1 1 7 6M8 1 1 7" /></svg>
                    </button>
                </div>
            </div>
            <form className="flex border border-[#6d8d99] bg-[#f0efef] px-[7px] pt-[8px] pb-[6px]" onSubmit={(e) => e.preventDefault()}>
                <div className="w-[274px]">
                    <div className="flex h-[12px] items-center gap-[6px]"><span className="w-[79px] text-right whitespace-nowrap">Создать дубликат:</span><span>Слой 2</span></div>
                    <div className="mt-[5px] flex items-center gap-[3px]">
                        <label htmlFor="copy" className="w-[79px] text-right">Как:</label>
                        <div className="flex h-[17px] flex-1 items-center border border-[#333] bg-white px-[3px]">
                            <input id="copy" defaultValue="Слой 2 копия" size={1} className="h-[12px] w-[59px] bg-[#3399ee] leading-[12px] text-white outline-none" />
                            <span className="h-[11px] border-l border-black" />
                        </div>
                    </div>
                    <fieldset className="mt-1 border border-[#8c8c8c] pr-[6px] pb-1.5">
                        <legend className="ml-[11px] px-[3px] leading-[14px]">Назначение</legend>
                        <div className="mt-1 flex items-center gap-[3px]">
                            <label htmlFor="doc" className="w-[78px] text-right">Документ:</label>
                            <span className="relative flex h-[17px] flex-1">
                                <select id="doc" className="w-full appearance-none border border-[#333] bg-white pl-1 leading-[15px] outline-none"><option>Без имени-1</option></select>
                                <Tri className="pointer-events-none absolute top-[7px] right-1 w-[6px] text-black" />
                            </span>
                        </div>
                        <div className="mt-1 flex items-center gap-[3px]">
                            <label htmlFor="name" className="w-[78px] text-right">Имя:</label>
                            <input id="name" disabled className="h-[17px] min-w-0 flex-1 border border-[#555] bg-[#f0eeee]" />
                        </div>
                    </fieldset>
                </div>
                <div className="ml-auto flex w-[87px] flex-col gap-[7px]">
                    <button className="h-[14px] rounded-xs border border-[#3c7fb1] bg-linear-to-b from-[#e6f5fd] from-50% to-[#b4e0f8] to-50% leading-[12px]">ОК</button>
                    <button className="h-[14px] rounded-xs border border-[#707070] bg-linear-to-b from-[#f0f0f0] from-50% to-[#cfcfcf] to-50% leading-[12px]">Отмена</button>
                </div>
            </form>
            {/* cursor */}
            <svg viewBox="0 0 10 16" className="absolute top-[35px] left-[348px] h-[14px] w-[9px]" fill="#fff" stroke="#222"><path d="M1 1v12l3-3 2 5 2-1-2-4h4z" /></svg>
        </div>
    );
}

/* ---------- taskbar ---------- */

function BlueTile() {
    return <svg viewBox="0 0 12 12" className="size-[11px] shrink-0"><path d="M0 0h12v12H0z" fill="#1a1ad0" /><path d="M2 2h8v8H2zM4 4h3v3H4zM8 6v3M6 8.500h4" fill="none" stroke="#fff" /></svg>;
}

const tasks: { title: string; icon: ReactNode }[] = [
    { title: "Блог 4есТер'а - Блог ...", icon: <svg viewBox="0 0 12 12" className="size-3 shrink-0"><circle cx="6" cy="6" r="6" fill="#e8701a" /><circle cx="6.500" cy="5" r="3.500" fill="#3e6fb8" /><path d="M0 5c2-3 4-1 5 0 0 3 3 4 6 2-1 5-8 6-10 2z" fill="#f08a20" /></svg> },
    { title: "Без имени-1 @ 100% ...", icon: <span className="flex size-[11px] shrink-0 items-center justify-center bg-[#1b5f98] text-[6px] font-bold text-[#9ed4ff]">Ps</span> },
    { title: "Программы", icon: <svg viewBox="0 0 12 12" className="size-[11px] shrink-0"><path d="m2 2 5-2v10l-5 2z" fill="#e8f6ff" /><path d="M7 1h3v8l-3 1z" fill="#7fb6d8" /></svg> },
    { title: "Flashing", icon: <BlueTile /> },
];

function Taskbar() {
    return (
        <footer className="flex h-[23px] shrink-0 items-center bg-linear-to-b from-[#888] via-[#444] via-45% to-[#0a0a0a] to-50% text-[8px] text-white">
            <button aria-label="Пуск" className="ml-2 flex size-[23px] shrink-0 items-center justify-center rounded-full border border-[#7ba8bd] bg-radial-[at_50%_90%] from-[#2fc0ee] to-[#1c3a50]">
                <svg viewBox="0 0 14 14" className="size-[14px]"><path d="M1 3q3-2 5.500-.5L6 7Q3.500 5.500 0 7z" fill="#f0622a" /><path d="M7.500 3Q10 4 13.500 2.500L12.500 7Q9.500 8.500 6.700 7z" fill="#8cc63f" /><path d="M0 8q3-1.500 5.500 0L5 12.500Q2.500 11-.5 12.500z" fill="#3fa0e8" /><path d="M6.500 8.500Q9.500 9.500 12.500 8L11.500 12.500Q8.500 14 5.700 13z" fill="#fcc820" /></svg>
            </button>
            <button aria-label="Internet Explorer" className="ml-[17px]">
                <svg viewBox="0 0 12 12" className="size-3" fill="none"><path d="M9.500 8.500A4 4 0 1 1 10 6H3" stroke="#4bb4f4" strokeWidth="2" /><path d="M1 11C-1 9 6 0 11.500 1" stroke="#f0c040" /></svg>
            </button>
            <button aria-label="Flashing" className="ml-[6px]"><BlueTile /></button>
            <div className="ml-[88px] flex min-w-0 gap-[3px]">
                {tasks.map((t, i) => (
                    <button key={t.title} className={clsx("flex h-5 w-[117px] items-center gap-[3px] rounded-xs border border-[#666] pl-[5px] whitespace-nowrap", i === 1 ? "bg-[#0c0c0c]" : "bg-linear-to-b from-[#6a6a6a] from-48% to-[#141414] to-52%")}>
                        {t.icon}{t.title}
                    </button>
                ))}
            </div>
            <div className="ml-auto flex shrink-0 items-center gap-[3px] pr-[9px]">
                <span className="mr-[5px] h-3 w-3 bg-[#3a94e4] text-center leading-3">RU</span>
                <svg viewBox="0 0 6 6" className="mr-2 size-[6px]" fill="none" stroke="#aaa"><path d="m0 3 3-3 3 3M0 6l3-3 3 3" /></svg>
                <BlueTile />
                <svg viewBox="0 0 12 12" className="size-3"><circle cx="5" cy="5" r="5" fill="#e03a20" /><circle cx="7" cy="7" r="4.500" fill="#f5a520" /><path d="M7 4v3M7 8v1.500" stroke="#7a2000" strokeWidth="1.300" /></svg>
                <svg viewBox="0 0 12 12" className="size-[11px]"><path d="M0 0h12v12H0z" fill="#ccc" /><path d="M2 1v10M3 6l6-5M4 6l5 5" stroke="#222" strokeWidth="1.500" /><path d="M8 7l4 5H5z" fill="#e8c020" /></svg>
                <svg viewBox="0 0 12 12" className="size-[11px]"><path d="M6 0l5 1.500C11 7 9 10 6 12 3 10 1 7 1 1.500z" fill="#c83030" stroke="#ddd" /><path d="m4 3.500 4 4M8 3.500l-4 4" stroke="#fff" strokeWidth="1.500" /></svg>
                <time className="ml-[3px]">11:55</time>
            </div>
        </footer>
    );
}

export default function App() {
    return (
        <div className="h-screen overflow-hidden bg-black font-['DejaVu_Sans_Condensed','DejaVu_Sans',sans-serif]">
            <svg className="absolute size-0" aria-hidden="true">
                <defs>
                    <linearGradient id="grad-h"><stop stopColor="#222" /><stop offset="1" stopColor="#eee" /></linearGradient>
                    <linearGradient id="sea" x2="0" y2="1"><stop stopColor="#088db3" /><stop offset=".5" stopColor="#087ea6" /><stop offset="1" stopColor="#096a92" /></linearGradient>
                </defs>
            </svg>
            <div className="relative mx-auto flex h-full w-3/4 flex-col">
                <div className="flex min-h-0 flex-1 flex-col border-x-3 border-t-2 border-b-4 border-x-[#b8b8b8] border-t-[#777] border-b-[#c4c4c4]">
                    <TitleBar />
                    <MenuBar />
                    <OptionsBar />
                    <div className="flex min-h-0 flex-1">
                        <Toolbox />
                        <DocumentWindow />
                        <div className="flex w-72 shrink-0 flex-col">
                            <div className="flex h-[9px] shrink-0 justify-between bg-[#434343] pr-1 pl-[19px] text-[7px] leading-[8px] text-white"><span>◂◂</span><span>▸▸</span></div>
                            <div className="flex min-h-0 flex-1">
                                <Dock />
                                <div className="flex min-w-0 flex-1 flex-col gap-0.5 bg-[#222]">
                                    <SwatchesPanel />
                                    <CharacterPanel />
                                    <LayersPanel />
                                </div>
                            </div>
                        </div>
                    </div>
                </div>
                <Taskbar />
                <DuplicateDialog />
            </div>
        </div>
    );
}
